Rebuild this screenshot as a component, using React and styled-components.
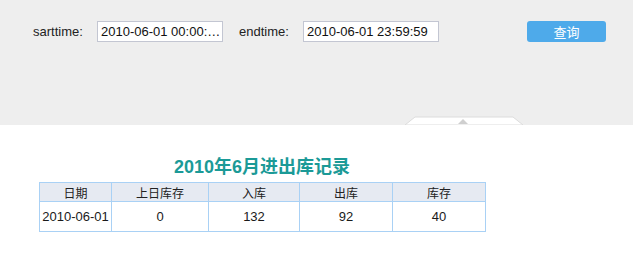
import React from "react";
import styled, { createGlobalStyle } from "styled-components";

const Global = createGlobalStyle`
  html, body { margin: 0; padding: 0; background: #ffffff; }
  body { font-family: "Liberation Sans", Arial, "Noto Sans CJK SC", sans-serif; color: #1a1a1a; }
  * { box-sizing: border-box; }
`;

const Page = styled.div`
  width: 633px;
  height: 262px;
  display: flex;
  flex-direction: column;
`;

const TopPanel = styled.div`
  background: #eeeeee;
  height: 125px;
  display: flex;
  flex-direction: column;
  justify-content: space-between;
`;

const Toolbar = styled.div`
  display: flex;
  align-items: center;
  padding: 21px 0 0 33px;
  height: 42px;
`;

const Label = styled.span`
  font-size: 13px;
  color: #222;
  width: ${(p) => p.$w}px;
  flex: none;
`;

const Field = styled.input`
  width: ${(p) => p.$w}px;
  height: 21px;
  border: 1px solid #c3c6d2;
  background: #fff;
  padding: 0 1px 0 3px;
  font-family: "Liberation Sans", Arial, sans-serif;
  font-size: 13px;
  color: #111;
  text-overflow: ellipsis;
  outline: none;
  margin-right: ${(p) => p.$mr}px;
  flex: none;
`;

const Button = styled.button`
  width: 79px;
  height: 21px;
  border: none;
  border-radius: 3px;
  background: #4eaaea;
  color: #fff;
  font-family: "Noto Sans CJK SC", sans-serif;
  font-size: 13px;
  padding: 0;
  flex: none;
`;

const Tab = styled.svg`
  display: block;
  margin-left: 405px;
  width: 118px;
  height: 9px;
`;

const Content = styled.div`
  padding: 29px 0 0 39px;
  width: 485px;
`;

const Title = styled.h2`
  margin: 0 0 2px 0;
  height: 26px;
  line-height: 26px;
  text-align: center;
  font-family: "Liberation Sans", Arial, "Noto Sans CJK SC", sans-serif;
  font-size: 18px;
  font-weight: bold;
  color: #1b9a97;
`;

const Table = styled.table`
  border-collapse: collapse;
  width: 446px;
  table-layout: fixed;
  font-size: 13px;
`;

const Th = styled.th`
  width: ${(p) => p.$w}px;
  height: 19px;
  padding: 0;
  border: 1px solid #a9d1f5;
  background: #e6eaf2;
  font-family: "Noto Sans CJK SC", sans-serif;
  font-weight: normal;
  font-size: 12px;
  color: #222;
  line-height: 17px;
`;

const Td = styled.td`
  height: 30px;
  padding: 0;
  border: 1px solid #a9d1f5;
  text-align: center;
  color: #1a1a1a;
  white-space: nowrap;
  overflow: hidden;
`;

const cols = [
  ["日期", 72],
  ["上日库存", 97],
  ["入库", 91],
  ["出库", 93],
  ["库存", 93],
];
const row = ["2010-06-01", "0", "132", "92", "40"];

export default function App() {
  return (
    <Page>
      <Global />
      <TopPanel>
        <Toolbar>
          <Label $w={64}>sarttime:</Label>
          <Field $w={126} $mr={16} defaultValue="2010-06-01 00:00:00" />
          <Label $w={64}>endtime:</Label>
          <Field $w={136} $mr={88} defaultValue="2010-06-01 23:59:59" />
          <Button>查询</Button>
        </Toolbar>
        <Tab viewBox="0 0 118 9">
          <path d="M0 9 L10 1 L108 1 L118 9 Z" fill="#ffffff" stroke="#dcdcdc" strokeWidth="1" />
          <path d="M53 8 L58 3 L63 8 Z" fill="#cfcfcf" />
        </Tab>
      </TopPanel>
      <Content>
        <Title>2010年6月进出库记录</Title>
        <Table>
          <thead>
            <tr>
              {cols.map(([t, w]) => (
                <Th key={t} $w={w}>{t}</Th>
              ))}
            </tr>
          </thead>
          <tbody>
            <tr>
              {row.map((v, i) => (
                <Td key={i}>{v}</Td>
              ))}
            </tr>
          </tbody>
        </Table>
      </Content>
    </Page>
  );
}
